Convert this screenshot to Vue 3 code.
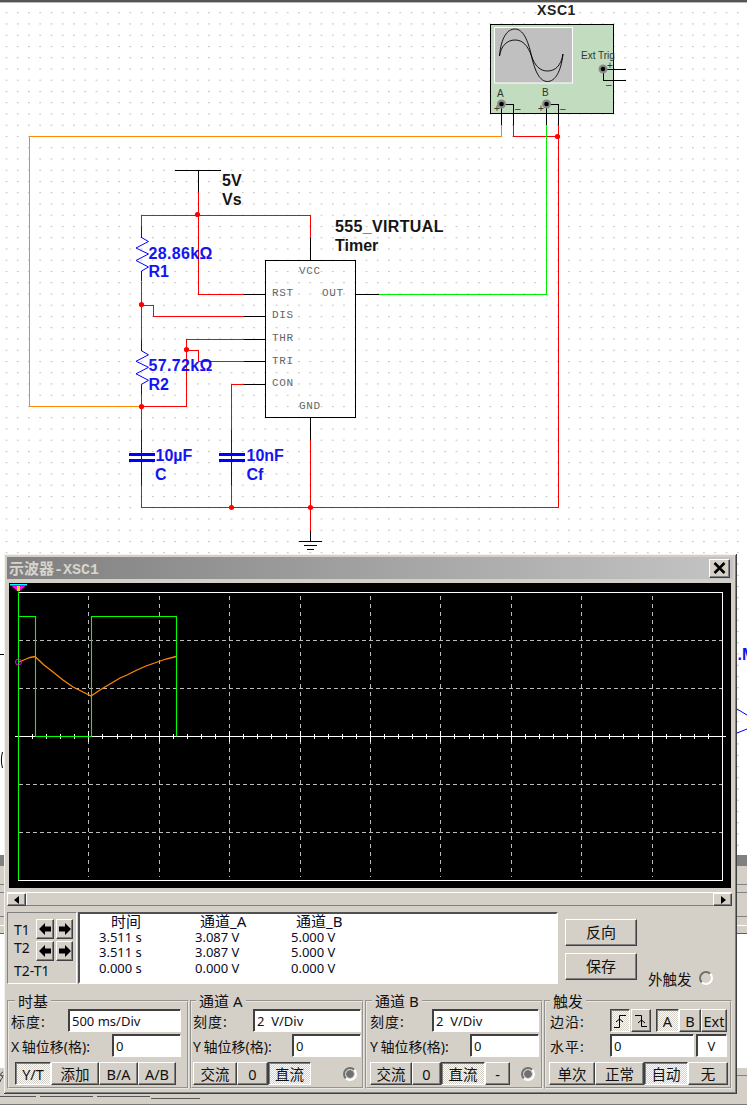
<script setup>
const wires = [
  { c: '#000', p: '175,170.5 220.5,170.5' },
  { c: '#000', p: '198.5,170 198.5,192' },
  { c: '#f00', p: '198.5,192 198.5,294.5 244,294.5' },
  { c: '#000', p: '244,294.5 266,294.5' },
  { c: '#f00', p: '310.5,237.5 310.5,215.5 141.5,215.5 141.5,226.5' },
  { c: '#000', p: '310.5,237.5 310.5,261' },
  { c: '#00f', p: '141.5,226.5 141.5,237.5' },
  { c: '#f00', p: '141.5,281.5 141.5,340' },
  { c: '#00f', p: '141.5,340 141.5,351' },
  { c: '#f00', p: '141.5,395 141.5,429.5' },
  { c: '#00f', p: '141.5,429.5 141.5,485' },
  { c: '#f00', p: '141.5,485 141.5,507.5 558.5,507.5 558.5,125' },
  { c: '#f00', p: '141.5,305.5 153.5,305.5 153.5,316.5 244,316.5' },
  { c: '#000', p: '244,316.5 266,316.5' },
  { c: '#f00', p: '141.5,406.5 186.5,406.5 186.5,339.5 244,339.5' },
  { c: '#000', p: '244,339.5 266,339.5' },
  { c: '#f00', p: '186.5,350.5 198.5,350.5 198.5,361.5 244,361.5' },
  { c: '#000', p: '244,361.5 266,361.5' },
  { c: '#f00', p: '244,384.5 231.5,384.5 231.5,429.5' },
  { c: '#000', p: '244,384.5 266,384.5' },
  { c: '#00f', p: '231.5,429.5 231.5,485' },
  { c: '#f00', p: '231.5,485 231.5,507.5' },
  { c: '#000', p: '310.5,417 310.5,440' },
  { c: '#f00', p: '310.5,440 310.5,531' },
  { c: '#000', p: '310.5,531 310.5,541' },
  { c: '#000', p: '299,541.5 322,541.5' },
  { c: '#000', p: '304,545.5 317,545.5' },
  { c: '#000', p: '307,549.5 314,549.5' },
  { c: '#f80', p: '501.5,125 501.5,136.5 29.5,136.5 29.5,406.5 141.5,406.5' },
  { c: '#f00', p: '513.5,125 513.5,136.5 558,136.5' },
  { c: '#0e0', p: '546.5,125 546.5,294.5 379,294.5' },
  { c: '#000', p: '379,294.5 356,294.5' },
  { c: '#000', p: '501.5,104.5 501.5,125' },
  { c: '#000', p: '501.5,104.5 513.5,104.5 513.5,125' },
  { c: '#000', p: '546.5,104.5 546.5,125' },
  { c: '#000', p: '546.5,104.5 558.5,104.5 558.5,125' },
  { c: '#000', p: '603.5,69.5 626,69.5' },
  { c: '#000', p: '603.5,69.5 603.5,80.5 626,80.5' },
]

const nodes = [
  [197.5, 214.5], [557.5, 136.5], [141.5, 304.5], [186.5, 349.5],
  [141.5, 406.5], [231.5, 507.5], [310.5, 507.5],
]

const zig = (o) =>
  `141.5,${237.5 + o} 148.5,${241.5 + o} 136,${248 + o} 148.5,${254 + o} 136,${260.5 + o} 148.5,${267 + o} 141.5,${271 + o} 141.5,${281.5 + o}`

const pins = [
  ['VCC', 299, 274], ['RST', 272, 296], ['OUT', 322, 296], ['DIS', 272, 318],
  ['THR', 272, 341], ['TRI', 272, 364], ['CON', 272, 386], ['GND', 299, 409],
]

const labels = [
  ['5V', 222, 186, 'lb'], ['Vs', 222, 205, 'lb'],
  ['555_VIRTUAL', 335, 232, 'lb wide'], ['Timer', 335, 251, 'lb'],
  ['28.86kΩ', 148.5, 258.5, 'lb blue wide'], ['R1', 148.5, 277, 'lb blue'],
  ['57.72kΩ', 148.5, 371, 'lb blue wide'], ['R2', 148.5, 389.5, 'lb blue'],
  ['10µF', 155.5, 461, 'lb blue'], ['C', 155, 480, 'lb blue'],
  ['10nF', 246.5, 461, 'lb blue'], ['Cf', 246.5, 480, 'lb blue'],
  ['XSC1', 537, 15, 'xsc'],
]

const gridX = Array.from({ length: 9 }, (_, i) => 18 + 70.4 * (i + 1))
const gridY = [640, 688, 784, 832]
const ticks = Array.from({ length: 51 }, (_, i) => 18 + 14.08 * i)

const green = '18,616.5 35.5,616.5 35.5,736.5 91.5,736.5 91.5,616.5 176.5,616.5 176.5,736.5'
const orange = '19,662 25,659.5 30,657.5 35,656.5 44,665 53,672 63,680 73,687 83,692 91,696 100,690 110,684 120,678 127,675 136,670.5 146,666 156,662.5 166,659 176,656.5'

const values = [
  ['3.511 s', '3.087 V', '5.000 V'],
  ['3.511 s', '3.087 V', '5.000 V'],
  ['0.000 s', '0.000 V', '0.000 V'],
]
</script>

<template>
  <div class="page">
    <svg class="schematic" width="747" height="1105" viewBox="0 0 747 1105">
      <defs>
        <pattern id="dots" x="0" y="0" width="11.25" height="11.25" patternUnits="userSpaceOnUse">
          <rect x="6" y="1" width="1" height="1" fill="#888" />
        </pattern>
      </defs>
      <rect width="747" height="1105" fill="#fff" />
      <rect y="4" width="747" height="850" fill="url(#dots)" />
      <rect width="747" height="2" fill="#555" />
      <rect y="2" width="747" height="1" fill="#bbb" />

      <!-- oscilloscope symbol -->
      <rect x="490.5" y="24.5" width="123" height="89" fill="#c1dcbf" stroke="#000" />
      <rect x="494.5" y="27.5" width="78" height="55.5" fill="#c0c0c0" stroke="#fff" />
      <path d="M499.5 56C501 38 507 29 515 29C523 29 528 40 531.5 56C535 72 540 81.5 547.5 81.5C555 81.5 561 72 563 54" fill="none" stroke="#000" stroke-width=".9" />
      <path d="M499.5 56C501 46 507 40 515 40C523 40 528 46 531.5 56C535 66 540 71 547.5 71C555 71 561 66 563 54" fill="none" stroke="#000" stroke-width=".9" />

      <g v-for="(w, i) in wires" :key="i">
        <polyline :points="w.p" fill="none" :stroke="w.c" shape-rendering="crispEdges" />
      </g>

      <g v-for="t in [[501.5, 104], [546.5, 104], [603, 69]]" :key="t[0]">
        <circle :cx="t[0]" :cy="t[1]" r="3.4" fill="#000" stroke="#8a8a8a" stroke-width="2.2" />
      </g>
      <text x="497" y="97" class="sm">A</text>
      <text x="542" y="96" class="sm">B</text>
      <text x="581" y="59" class="sm">Ext Trig</text>
      <text x="494" y="112" class="sm">+</text>
      <text x="515" y="112" class="sm">–</text>
      <text x="538" y="112" class="sm">+</text>
      <text x="560" y="112" class="sm">–</text>
      <text x="607" y="69" class="sm">+</text>
      <text x="606" y="88" class="sm">–</text>

      <!-- timer -->
      <rect x="265.5" y="260.5" width="90" height="157" fill="none" stroke="#000" shape-rendering="crispEdges" />
      <text v-for="p in pins" :key="p[0]" :x="p[1]" :y="p[2]" class="pin">{{ p[0] }}</text>

      <!-- resistors -->
      <polyline :points="zig(0)" fill="none" stroke="#00f" />
      <polyline :points="zig(113.3)" fill="none" stroke="#00f" />

      <!-- capacitors -->
      <path d="M129 454.5H154.5M129 460.5H154.5M219 454.5H244.5M219 460.5H244.5" stroke="#00f" stroke-width="3" shape-rendering="crispEdges" />

      <circle v-for="n in nodes" :key="n.join()" :cx="n[0]" :cy="n[1]" r="2.6" fill="#f00" />
      <text v-for="l in labels" :key="l[0]" :x="l[1]" :y="l[2]" :class="l[3]">{{ l[0] }}</text>

      <!-- what shows beside the window -->
      <path d="M0 654.5H4" stroke="#000" />
      <path d="M2.5 752C1 757 1 763 2.5 768" stroke="#000" fill="none" />
      <text x="737.5" y="660" class="lb blue">.M</text>
      <path d="M737 709L747 715M737 733L747 729" stroke="#00f" />
      <g v-for="x in [0, 737]" :key="x">
        <rect :x="x" y="855" width="10" height="11" fill="#808080" />
        <rect :x="x" y="866" width="10" height="20" fill="#d4d0c8" />
        <rect :x="x" y="884" width="10" height="1" fill="#808080" />
        <rect :x="x" y="886" width="10" height="39" fill="#d4d0c8" />
        <rect :x="x" y="892" width="10" height="1" fill="#808080" />
        <rect :x="x" y="916" width="10" height="1" fill="#808080" />
        <rect :x="x" y="925" width="10" height="1" fill="#fff" />
        <rect :x="x" y="926" width="10" height="7" fill="#d4d0c8" />
        <rect :x="x" y="933" width="10" height="1" fill="#606060" />
        <rect :x="x" y="1068" width="10" height="37" fill="#d4d0c8" />
        <rect :x="x" y="1075" width="10" height="1" fill="#808080" />
      </g>
      <path d="M3 1072C0 1073 0 1076 3 1077C1 1079 0 1081 0 1082" fill="none" stroke="#333" />
      <rect y="1093" width="747" height="12" fill="#d4d0c8" />
      <path d="M0 1096.5H36M40 1096.5H93M97 1096.5H150M151 1098.5H200" stroke="#555" />
      <path d="M0 1104.5H747" stroke="#777" />
    </svg>

    <section class="win">
      <header class="title">
        <span class="title-text">示波器-XSC1</span>
        <button class="btn close" type="button" aria-label="关闭">
          <svg width="13" height="12" viewBox="0 0 13 12"><path d="M1.5 1L11.5 11M11.5 1L1.5 11" stroke="#000" stroke-width="2.6" /></svg>
        </button>
      </header>

      <div class="screen">
        <svg width="722" height="305" viewBox="9 583 722 305">
          <rect x="9" y="583" width="722" height="305" fill="#000" />
          <path d="M18 592.5H722.5V880.5H18" fill="none" stroke="#fff" shape-rendering="crispEdges" />
          <path v-for="x in gridX" :key="x" :d="`M${Math.round(x) + 0.5} 596V877`" stroke="#bbb" stroke-dasharray="4 4" shape-rendering="crispEdges" />
          <path v-for="y in gridY" :key="y" :d="`M19 ${y + 0.5}H722`" stroke="#bbb" stroke-dasharray="4 3" shape-rendering="crispEdges" />
          <path d="M15 736.5H726" stroke="#fff" shape-rendering="crispEdges" />
          <path v-for="(t, i) in ticks" :key="t" :d="i % 5 === 0 ? `M${Math.round(t) + 0.5} 731V742` : `M${Math.round(t) + 0.5} 734V739`" stroke="#fff" shape-rendering="crispEdges" />
          <path d="M18.5 592V880" stroke="#0f0" stroke-width="1.1" />
          <polyline :points="green" fill="none" stroke="#0f0" stroke-width="1.1" />
          <polyline :points="orange" fill="none" stroke="#f80" stroke-width="1.3" />
          <circle cx="18.5" cy="662" r="3" fill="none" stroke="#f0f" />
          <path d="M10 584H27V585.5H10Z" fill="#0ff" />
          <path d="M11 585.5H26L18.5 592Z" fill="#f0f" />
          <rect x="17" y="586" width="3" height="5" fill="#dd0" />
        </svg>
      </div>

      <div class="scrollbar">
        <button class="btn sb-btn" type="button" aria-label="左">
          <svg width="6" height="8" viewBox="0 0 6 8"><path d="M5 0V8L0 4Z" /></svg>
        </button>
        <div class="sb-track"></div>
        <button class="btn sb-btn right" type="button" aria-label="右">
          <svg width="6" height="8" viewBox="0 0 6 8"><path d="M1 0V8L6 4Z" /></svg>
        </button>
      </div>

      <div class="readout">
        <div class="cursors">
          <div class="t-labels">
            <span>T1</span>
            <span>T2</span>
            <span class="t-diff">T2-T1</span>
          </div>
          <div class="t-btns">
            <button v-for="n in 4" :key="n" class="btn t-btn" type="button" :aria-label="'移动' + n">
              <svg width="13" height="12" viewBox="0 0 13 12">
                <path :d="n % 2 ? 'M0 6L6 0V3.5H12V8.5H6V12Z' : 'M13 6L7 0V3.5H1V8.5H7V12Z'" />
              </svg>
            </button>
          </div>
        </div>
        <div class="table">
          <span class="th first">时间</span>
          <span class="th">通道_A</span>
          <span class="th">通道_B</span>
          <template v-for="(r, i) in values" :key="i">
            <span v-for="(v, j) in r" :key="j" class="td">{{ v }}</span>
          </template>
        </div>
        <div class="actions">
          <button class="btn action" type="button">反向</button>
          <button class="btn action" type="button">保存</button>
        </div>
        <div class="ext">
          <span>外触发</span>
          <span class="radio hollow"></span>
        </div>
      </div>

      <div class="groups">
        <fieldset class="grp g-time">
          <legend>时基</legend>
          <div class="row"><label class="wide-l">标度:</label><input class="inp w113" value="500 ms/Div" /></div>
          <div class="row"><label>X 轴位移(格):</label><input class="inp w69" value="0" /></div>
          <div class="btns pad8">
            <button class="btn on w36" type="button">Y/T</button>
            <button class="btn w48" type="button">添加</button>
            <button class="btn w39" type="button">B/A</button>
            <button class="btn w38" type="button">A/B</button>
          </div>
        </fieldset>

        <fieldset class="grp g-a">
          <legend>通道 A</legend>
          <div class="row"><label class="wide-l">刻度:</label><input class="inp w108" value="2  V/Div" /></div>
          <div class="row"><label>Y 轴位移(格):</label><input class="inp w69" value="0" /></div>
          <div class="btns">
            <button class="btn w44" type="button">交流</button>
            <button class="btn w31" type="button">0</button>
            <button class="btn on w43" type="button">直流</button>
            <span class="radio dot push"></span>
          </div>
        </fieldset>

        <fieldset class="grp g-b">
          <legend>通道 B</legend>
          <div class="row"><label class="wide-l">刻度:</label><input class="inp w107" value="2  V/Div" /></div>
          <div class="row"><label>Y 轴位移(格):</label><input class="inp w69" value="0" /></div>
          <div class="btns">
            <button class="btn w42" type="button">交流</button>
            <button class="btn w29" type="button">0</button>
            <button class="btn on w44" type="button">直流</button>
            <button class="btn w25" type="button">-</button>
            <span class="radio dot push"></span>
          </div>
        </fieldset>

        <fieldset class="grp g-trig">
          <legend>触发</legend>
          <div class="row trig-row">
            <label class="wide-l">边沿:</label>
            <div class="edge">
              <button class="btn on w20 h23" type="button" aria-label="上升沿">
                <svg width="14" height="14" viewBox="0 0 14 14"><path d="M1 13.5H6.5V1.5H13M3 8L6.5 5L10 8" fill="none" stroke="#000" /></svg>
              </button>
              <button class="btn w20 h23 m1" type="button" aria-label="下降沿">
                <svg width="14" height="14" viewBox="0 0 14 14"><path d="M1 1.5H7.5V12.5H13M4 9L7.5 6L11 9" fill="none" stroke="#000" /></svg>
              </button>
              <button class="btn on w23 h23 m5" type="button">A</button>
              <button class="btn w22 h23" type="button">B</button>
              <button class="btn w26 h23" type="button">Ext</button>
            </div>
          </div>
          <div class="row trig-row">
            <label class="wide-l">水平:</label>
            <div class="level">
              <input class="inp w84" value="0" />
              <input class="inp w31 v" value="V" />
            </div>
          </div>
          <div class="btns trig-btns">
            <button class="btn w46" type="button">单次</button>
            <button class="btn w49" type="button">正常</button>
            <button class="btn on w44" type="button">自动</button>
            <button class="btn w40" type="button">无</button>
          </div>
        </fieldset>
      </div>
    </section>
  </div>
</template>

<style>
html, body { margin: 0; padding: 0; background: #fff; overflow: hidden; }
</style>

<style scoped>
.page {
  position: relative;
  width: 747px;
  height: 1105px;
  overflow: hidden;
  font-family: "Noto Sans", "Noto Sans CJK SC", sans-serif;
  font-size: 15px;
  color: #111;
}
.schematic { position: absolute; left: 0; top: 0; display: block; }
.lb { font: bold 16px "Liberation Sans", sans-serif; fill: #151515; }
.lb.wide { letter-spacing: .35px; }
.lb.blue { fill: #1414f0; }
.xsc { font: bold 14px "Liberation Sans", sans-serif; letter-spacing: .6px; fill: #222; }
.sm { font: 10px "Liberation Sans", sans-serif; fill: #333; }
.pin { font: 11px "Liberation Mono", monospace; fill: #666; letter-spacing: .6px; }

.win {
  position: absolute;
  left: 4px;
  top: 554px;
  width: 733px;
  height: 540px;
  box-sizing: border-box;
  padding: 3px;
  background: #d4d0c8;
  border-right: 1px solid #404040;
  border-bottom: 1px solid #404040;
  box-shadow: inset 1px 1px 0 #f4f2ee, inset -1px -1px 0 #808080;
  display: flex;
  flex-direction: column;
}
.title {
  height: 22px;
  flex: none;
  display: flex;
  align-items: center;
  justify-content: space-between;
  padding: 0 3px 0 2px;
  background: linear-gradient(90deg, #808080, #c4c4c4);
}
.title-text {
  font: bold 15px "Liberation Mono", "Noto Sans CJK SC", monospace;
  color: #d8d4cc;
}
.btn {
  box-sizing: border-box;
  margin: 0;
  padding: 0;
  display: flex;
  align-items: center;
  justify-content: center;
  height: 23px;
  flex: none;
  font: 14.5px "Noto Sans", "Noto Sans CJK SC", sans-serif;
  color: #111;
  background: #d4d0c8;
  border: 1px solid;
  border-color: #fff #404040 #404040 #fff;
  box-shadow: inset -1px -1px 0 #808080;
}
.btn.on {
  background: repeating-conic-gradient(#d4d0c8 0 25%, #fff 0 50%) 0 0 / 2px 2px;
  border-color: #404040 #fff #fff #404040;
  box-shadow: inset 1px 1px 0 #808080;
}
.close { width: 21px; height: 19px; }
.screen {
  flex: none;
  margin: 4px 2px 0 2px;
  height: 305px;
  line-height: 0;
}
.screen svg { display: block; }
.scrollbar {
  flex: none;
  box-sizing: border-box;
  display: flex;
  margin: 4px 1px 0 0;
  height: 14px;
  background: #d4d0c8;
  border-top: 1px solid #fff;
  border-bottom: 1px solid #808080;
}
.sb-btn { width: 19px; height: 13px; }
.sb-btn svg { fill: #000; }
.sb-track { flex: 1; border-left: 1px solid #fff; }
.readout {
  flex: none;
  display: flex;
  margin-top: 6px;
  height: 72px;
}
.cursors {
  box-sizing: border-box;
  width: 70px;
  flex: none;
  display: flex;
  padding: 8px 0 0 6px;
  border: 1px solid;
  border-color: #808080 #fff #fff #808080;
  font-size: 14px;
}
.t-labels {
  display: flex;
  flex-direction: column;
  width: 22px;
  line-height: 18px;
}
.t-labels span { display: block; white-space: nowrap; }
.t-diff { margin-top: 5px; }
.t-btns {
  display: grid;
  grid-template-columns: 18px 17px;
  grid-auto-rows: 20px;
  gap: 2px;
  margin-top: -2px;
  height: 42px;
}
.t-btn { width: 100%; height: 100%; }
.t-btn svg { fill: #000; }
.table {
  box-sizing: border-box;
  width: 480px;
  margin-left: 1px;
  flex: none;
  display: grid;
  grid-template-columns: 96px 96px 96px;
  grid-auto-rows: 15.7px;
  padding: 0 0 0 19px;
  background: #fff;
  border: 2px solid;
  border-color: #505050 #fff #fff #505050;
  font-size: 13px;
  color: #0a0a2a;
  line-height: 15px;
}
.th { margin-left: 5px; font-size: 15px; line-height: 14px; }
.th.first { margin-left: 12px; }
.td { white-space: nowrap; }
.actions {
  display: flex;
  flex-direction: column;
  gap: 7px;
  margin: 7px 0 0 7px;
}
.action { width: 72px; height: 27px; font-size: 15px; padding-bottom: 3px; }
.ext {
  display: flex;
  align-items: center;
  gap: 7px;
  height: 18px;
  margin: 57px 0 0 11px;
  white-space: nowrap;
  font-size: 14.5px;
}
.radio {
  display: block;
  flex: none;
  box-sizing: border-box;
  width: 14px;
  height: 14px;
  border-radius: 50%;
  border: 2px solid;
  border-color: #707070 #fff #fff #707070;
  background: #d4d0c8;
}
.radio.dot { background: radial-gradient(circle, #707070 0 3.5px, #d4d0c8 4px); }
.groups {
  flex: none;
  display: flex;
  gap: 1px;
  margin-top: 8px;
  height: 97px;
}
.grp {
  box-sizing: border-box;
  margin: 0;
  min-width: 0;
  height: 97px;
  border: 2px groove #e8e6e0;
  display: block;
}
.grp legend {
  padding: 0 3px;
  margin: 0 0 -2px 0;
  font-size: 15px;
  line-height: 18px;
}
.g-time { width: 182px; padding: 0 6px 0 2px; }
.g-a { width: 174px; padding: 0 1px 0 1px; }
.g-b { width: 178px; padding: 0 2px 0 3px; }
.g-trig { width: 188px; padding: 0 1px 0 4px; }
.g-time legend { margin-left: 4px; }
.g-a legend { margin-left: 3px; }
.g-b legend { margin-left: 2px; }
.row {
  display: flex;
  align-items: center;
  justify-content: space-between;
  height: 25px;
  font-size: 14px;
  word-spacing: -1px;
  white-space: nowrap;
}
.row label { display: block; }
.wide-l { letter-spacing: 1px; }
.inp {
  box-sizing: border-box;
  height: 23px;
  margin: 0;
  padding: 0 3px;
  display: block;
  background: #fff;
  border: 1px solid;
  border-color: #404040 #fff #fff #404040;
  box-shadow: inset 1px 1px 0 #404040;
  font: 13px "Noto Sans", sans-serif;
  color: #111;
  outline: none;
}
.v { text-align: center; }
.btns {
  display: flex;
  align-items: center;
  margin-top: 4px;
}
.pad8 { padding-left: 4px; }
.trig-btns { margin-left: -1px; }
.push { margin-left: auto; margin-right: 4px; }
.edge, .level { display: flex; gap: 0; align-items: center; }
.level { gap: 2px; }
.trig-row { padding-right: 2px; }
.m1 { margin-left: 1px; }
.m5 { margin-left: 5px; }
.h23 { height: 23px; }
.w20 { width: 20px; }
.w22 { width: 22px; }
.w23 { width: 23px; }
.w25 { width: 25px; }
.w26 { width: 26px; }
.w29 { width: 29px; }
.w31 { width: 31px; }
.w36 { width: 36px; }
.w38 { width: 38px; }
.w39 { width: 39px; }
.w40 { width: 40px; }
.w42 { width: 42px; }
.w43 { width: 43px; }
.w44 { width: 44px; }
.w46 { width: 46px; }
.w48 { width: 48px; }
.w49 { width: 49px; }
.w69 { width: 69px; }
.w84 { width: 84px; }
.w107 { width: 107px; }
.w108 { width: 108px; }
.w113 { width: 113px; }
</style>
